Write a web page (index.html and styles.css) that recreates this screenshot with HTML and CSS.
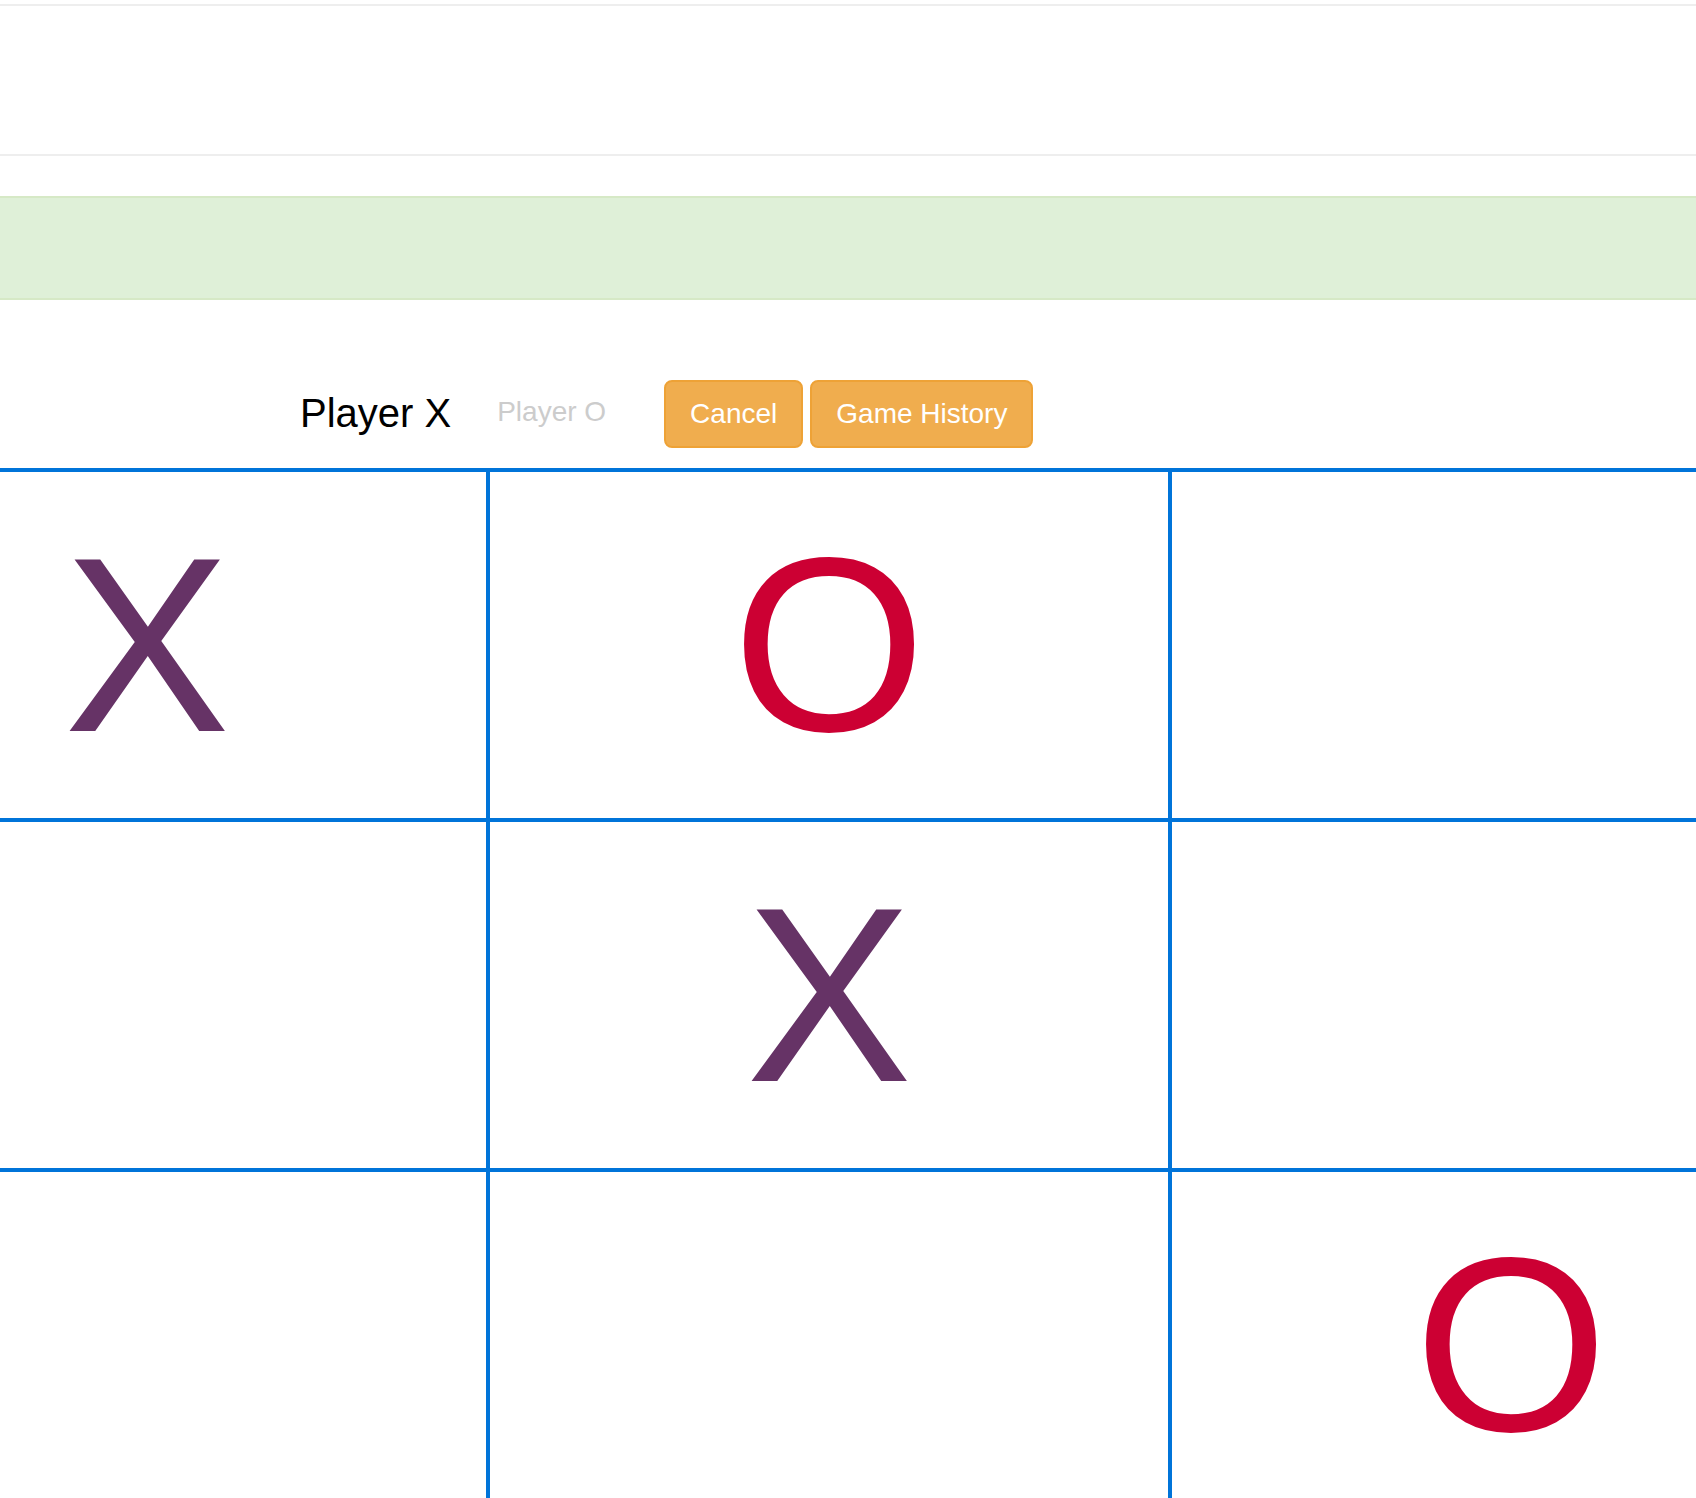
FILE: index.html
```html
<!DOCTYPE html>
<html lang="en">
<head>
<meta charset="utf-8">
<title>Tic Tac Toe</title>
<link rel="stylesheet" href="styles.css">
</head>
<body>
<div class="page">
  <nav class="navbar"></nav>
  <div class="alert alert-success"></div>
  <div class="status-row">
    <span class="player player-active">Player X</span>
    <span class="player player-inactive">Player O</span>
    <button class="btn btn-warning btn-cancel">Cancel</button>
    <button class="btn btn-warning">Game History</button>
  </div>
  <div class="board">
    <div class="cell"><span class="mark mark-x">X</span></div>
    <div class="cell"><span class="mark mark-o">O</span></div>
    <div class="cell"></div>
    <div class="cell"></div>
    <div class="cell"><span class="mark mark-x">X</span></div>
    <div class="cell"></div>
    <div class="cell"></div>
    <div class="cell"></div>
    <div class="cell"><span class="mark mark-o">O</span></div>
  </div>
</div>
</body>
</html>
```
FILE: styles.css
```css
* {
  box-sizing: border-box;
}

html, body {
  margin: 0;
  padding: 0;
  background: #fff;
  overflow: hidden;
}

body {
  font-family: "Liberation Sans", Arial, Helvetica, sans-serif;
  color: #000;
}

.page {
  height: 1498px;
  overflow: hidden;
  padding-top: 4px;
}

.navbar {
  height: 152px;
  border-top: 2px solid #eeeeee;
  border-bottom: 2px solid #eeeeee;
  background: #fff;
}

.alert {
  margin-top: 40px;
  height: 104px;
}

.alert-success {
  background: #dff0d8;
  border-top: 2px solid #d6e9c6;
  border-bottom: 2px solid #d6e9c6;
}

.status-row {
  display: flex;
  align-items: flex-start;
  margin-top: 80px;
  height: 88px;
  padding-left: 300px;
}

.player {
  white-space: nowrap;
}

.player-active {
  font-size: 40px;
  line-height: 48px;
  margin-top: 9px;
  margin-right: 46px;
  color: #000;
}

.player-inactive {
  font-size: 28px;
  line-height: 40px;
  margin-top: 12px;
  margin-right: 58px;
  color: #cccccc;
}

.btn {
  font-family: "Liberation Sans", Arial, Helvetica, sans-serif;
  font-size: 28px;
  line-height: 40px;
  padding: 12px 24px;
  border-radius: 8px;
  white-space: nowrap;
  margin: 0;
  cursor: pointer;
}

.btn-warning {
  background: #f0ad4e;
  border: 2px solid #eea236;
  color: #fff;
}

.btn-cancel {
  margin-right: 7px;
}

.board {
  display: grid;
  grid-template-columns: repeat(3, 682px);
  grid-auto-rows: 350px;
  width: 2046px;
  margin-left: -192px;
  border-top: 4px solid #0074d9;
}

.cell {
  display: flex;
  align-items: center;
  justify-content: center;
  border-right: 4px solid #0074d9;
  border-bottom: 4px solid #0074d9;
}

.mark {
  font-family: "Liberation Sans", Arial, Helvetica, sans-serif;
  font-size: 249px;
  line-height: 1;
}

.mark-x {
  color: #663366;
}

.mark-o {
  color: #cc0033;
}
```
